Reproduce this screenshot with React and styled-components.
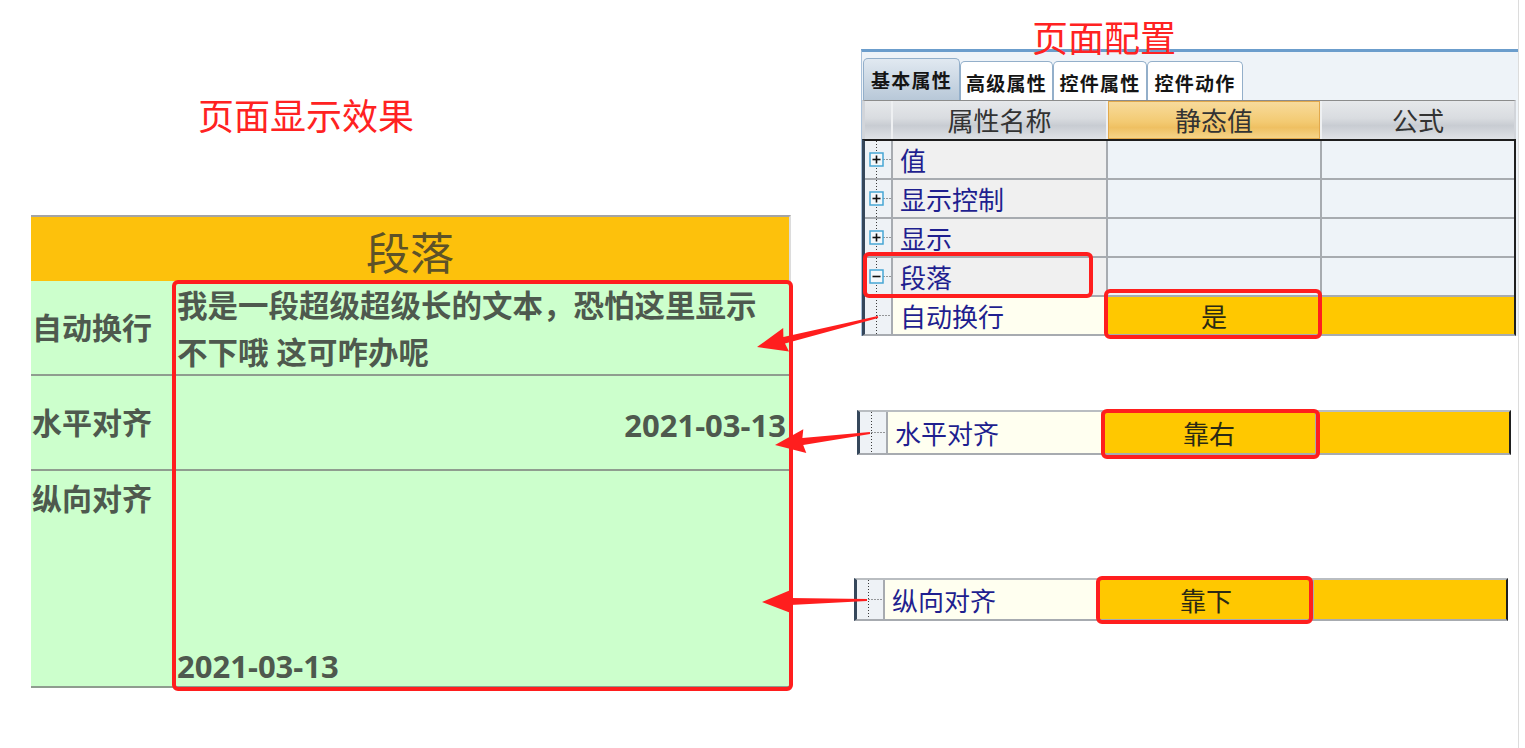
import React from 'react';
import styled, { createGlobalStyle } from 'styled-components';

const CJK = `"Noto Sans CJK SC", "Noto Sans", sans-serif`;
const SHOW = `"Open Sans", "Noto Sans CJK SC", sans-serif`;

const GlobalStyle = createGlobalStyle`
  html, body { margin: 0; padding: 0; background: #ffffff; }
  body { font-family: ${CJK}; }
  #root { width: 1525px; height: 748px; }
  * { box-sizing: border-box; }
`;

const Canvas = styled.div`
  position: relative;
  width: 1525px;
  height: 748px;
  display: flex;
  align-items: stretch;
  overflow: hidden;
  background: #ffffff;
`;

/* ---------- captions ---------- */
const Caption = styled.h2`
  position: relative;
  z-index: 1;
  margin: ${p => p.$top}px 0 ${p => p.$bottom || 0}px;
  padding-left: ${p => p.$indent}px;
  font: 400 36px/36px ${CJK};
  color: #ff2222;
`;

/* ---------- left: rendered page ---------- */
const LeftPane = styled.section`
  display: flex;
  flex-direction: column;
  width: 760px;
  margin-left: 31px;
`;

const ShowTable = styled.div`
  margin-top: 83px;
  width: 760px;
  display: grid;
  grid-template-columns: 143px 1fr;
  border-top: 2px solid #a4a4a4;
  border-right: 2px solid #dcdcdc;
`;

const ShowHeader = styled.div`
  grid-column: 1 / -1;
  height: 64px;
  background: #fdc10c;
  display: flex;
  align-items: center;
  justify-content: center;
  padding-top: 4px;
  font: 400 44px/44px ${CJK};
  color: #5d5228;
`;

const ShowCell = styled.div`
  height: ${p => p.$h + 2}px;
  background: #ccffcc;
  border-bottom: 2px solid #8f9d8f;
  display: flex;
  align-items: ${p => p.$v || 'center'};
  justify-content: ${p => p.$h2 || 'flex-start'};
  padding: ${p => p.$pad || '0'};
  font: 700 ${p => p.$size || 30}px/${p => p.$lh || 30}px ${SHOW};
  color: #4e594e;
  overflow: visible;
`;

const WrapText = styled.div`
  width: 100%;
`;

/* ---------- right: property panel ---------- */
const RightPane = styled.section`
  display: flex;
  flex-direction: column;
  width: 669px;
  margin-left: 59px;
  border-right: 1px solid #dcdcdc;
`;

const Panel = styled.div`
  margin-left: 11px;
  width: 657px;
  background: #eef3f8;
  border-left: 1px solid #a9c1da;
  border-top: 3px solid #6b9dcc;
`;

const TabBar = styled.div`
  height: 48px;
  display: flex;
  align-items: flex-end;
  padding-left: 1px;
`;

const Tab = styled.div`
  width: ${p => p.$w}px;
  height: ${p => (p.$active ? 42 : 39)}px;
  border: 1px solid #93afca;
  border-bottom: none;
  border-radius: 5px 5px 0 0;
  background: ${p => (p.$active ? 'linear-gradient(#e1e9f1, #b8c8d8)' : '#ffffff')};
  display: flex;
  align-items: center;
  justify-content: center;
  padding-top: ${p => (p.$active ? 0 : 3)}px;
  font: 700 19px/20px ${CJK};
  letter-spacing: 1.2px;
  color: #151515;
`;

const COLS = '26px 213px 212px 1fr';

const HeadGrid = styled.div`
  width: 654px;
  height: 39px;
  display: grid;
  grid-template-columns: ${COLS};
  gap: 0 2px;
  background: #eef0f2;
  border-top: 1px solid #8c8c8c;
  border-left: 3px solid #d2d5da;
  border-right: 2px solid #d2d5da;
`;

const HeadCell = styled.div`
  display: flex;
  align-items: center;
  justify-content: center;
  font: 400 26px/26px ${CJK};
  color: #333333;
  background: ${p =>
    p.$active
      ? 'linear-gradient(#f8dc9e 0%, #f3ca72 55%, #efc062 70%, #f6d68c 100%)'
      : 'linear-gradient(#e6e8eb 0%, #d9dce0 45%, #c8ccd2 65%, #dfe2e6 100%)'};
  box-shadow: ${p => (p.$active ? 'inset 0 0 0 1px #e2a94c' : 'none')};
`;

const PropGrid = styled.div`
  width: 654px;
  display: grid;
  grid-template-columns: ${COLS};
  grid-auto-rows: ${p => p.$row}px;
  gap: 2px;
  background: #a7abb0;
  border-top: 2px solid ${p => p.$topColor || '#1d1d1d'};
  border-left: 3px solid #35475b;
  border-right: 2px solid #1f1f1f;
  border-bottom: 2px solid #a7abb0;
  margin-left: ${p => p.$left || 0}px;
  margin-top: ${p => p.$top || 0}px;
`;

const ExpCell = styled.div`
  background: #eef2f6;
  display: flex;
`;

const NameCell = styled.div`
  background: ${p => (p.$hl ? '#fffff0' : '#f0f0f0')};
  display: flex;
  align-items: center;
  padding: 0 0 0 7px;
  font: 400 26px/26px ${CJK};
  color: #1f1f8f;
`;

const ValueCell = styled.div`
  background: ${p => (p.$hl ? '#ffc800' : '#eef3f8')};
  display: flex;
  align-items: center;
  justify-content: center;
  font: 400 26px/26px ${CJK};
  color: #2a2a14;
`;

/* ---------- overlay ---------- */
const Overlay = styled.svg`
  position: absolute;
  left: 0;
  top: 0;
  z-index: 5;
  pointer-events: none;
`;

function TreeIcon({ kind, h }) {
  const cx = 11.5;
  const cy = Math.floor(h / 2) + 0.5;
  const dot = { stroke: '#3a3a3a', strokeWidth: 1, strokeDasharray: '1 2' };
  return (
    <svg width="26" height={h} viewBox={`0 0 26 ${h}`}>
      <line x1={cx} y1="0" x2={cx} y2={h} {...dot} />
      <line x1={kind === 'leaf' ? cx : cx + 7} y1={cy} x2="26" y2={cy} {...dot} />
      {kind !== 'leaf' && (
        <>
          <rect x={cx - 6.5} y={cy - 6.5} width="13" height="13" fill="#f4f8fb" stroke="#47a7d5" strokeWidth="1.5" />
          <line x1={cx - 4} y1={cy} x2={cx + 4} y2={cy} stroke="#111" strokeWidth="1.6" />
          {kind === 'plus' && <line x1={cx} y1={cy - 4} x2={cx} y2={cy + 4} stroke="#111" strokeWidth="1.6" />}
        </>
      )}
    </svg>
  );
}

function PropRow({ icon, name, value, hl, h }) {
  return (
    <>
      <ExpCell>
        <TreeIcon kind={icon} h={h} />
      </ExpCell>
      <NameCell $hl={hl}>{name}</NameCell>
      <ValueCell $hl={hl}>{value}</ValueCell>
      <ValueCell $hl={hl} />
    </>
  );
}

function Arrow({ from, to }) {
  const [x1, y1] = from;
  const [x2, y2] = to;
  const dx = x2 - x1;
  const dy = y2 - y1;
  const len = Math.hypot(dx, dy);
  const ux = dx / len;
  const uy = dy / len;
  const nx = -uy;
  const ny = ux;
  const L = 28;
  const W = 12;
  const bx = x2 - ux * L;
  const by = y2 - uy * L;
  const p = (x, y) => `${x.toFixed(1)},${y.toFixed(1)}`;
  const pts = [
    p(x1 + nx * 1, y1 + ny * 1),
    p(bx + nx * 3.4, by + ny * 3.4),
    p(bx - ux * 2 + nx * W, by - uy * 2 + ny * W),
    p(x2, y2),
    p(bx - ux * 2 - nx * W, by - uy * 2 - ny * W),
    p(bx - nx * 3.4, by - ny * 3.4),
    p(x1 - nx * 1, y1 - ny * 1),
  ].join(' ');
  return <polygon points={pts} fill="#ff1e1e" />;
}

const tabs = [
  { label: '基本属性', w: 97, active: true },
  { label: '高级属性', w: 93 },
  { label: '控件属性', w: 94 },
  { label: '控件动作', w: 96 },
];

const props = [
  { icon: 'plus', name: '值' },
  { icon: 'plus', name: '显示控制' },
  { icon: 'plus', name: '显示' },
  { icon: 'minus', name: '段落' },
  { icon: 'leaf', name: '自动换行', value: '是', hl: true },
];

const boxes = [
  { x: 174, y: 282, w: 617, h: 407 },
  { x: 865, y: 254, w: 226, h: 42 },
  { x: 1106, y: 291, w: 214, h: 46 },
  { x: 1103, y: 411, w: 215, h: 46 },
  { x: 1098, y: 578, w: 213, h: 44 },
];

const arrows = [
  { from: [878, 317], to: [757, 347] },
  { from: [870, 433], to: [775, 445] },
  { from: [867, 600], to: [762, 602] },
];

export default function App() {
  return (
    <>
      <GlobalStyle />
      <Canvas>
        <LeftPane>
          <Caption $top={96} $indent={167}>页面显示效果</Caption>
          <ShowTable>
            <ShowHeader>段落</ShowHeader>

            <ShowCell $h={93} $pad="0 0 0 1px">自动换行</ShowCell>
            <ShowCell $h={93} $v="flex-start" $size={30.5} $lh={47} $pad="1px 4px 0 3px">
              <WrapText>我是一段超级超级长的文本，恐怕这里显示不下哦 这可咋办呢</WrapText>
            </ShowCell>

            <ShowCell $h={93} $pad="0 0 0 1px">水平对齐</ShowCell>
            <ShowCell $h={93} $h2="flex-end" $size={31} $lh={31} $pad="5px 3px 0 3px">2021-03-13</ShowCell>

            <ShowCell $h={215} $v="flex-start" $pad="13px 0 0 1px">纵向对齐</ShowCell>
            <ShowCell $h={215} $v="flex-end" $size={31} $lh={31} $pad="0 3px 4px 3px">2021-03-13</ShowCell>
          </ShowTable>
        </LeftPane>

        <RightPane>
          <Caption $top={18} $indent={182} $bottom={-5}>页面配置</Caption>
          <Panel>
            <TabBar>
              {tabs.map(t => (
                <Tab key={t.label} $w={t.w} $active={t.active}>{t.label}</Tab>
              ))}
            </TabBar>
            <HeadGrid>
              <HeadCell />
              <HeadCell>属性名称</HeadCell>
              <HeadCell $active>静态值</HeadCell>
              <HeadCell>公式</HeadCell>
            </HeadGrid>
            <PropGrid $row={37}>
              {props.map(r => (
                <PropRow key={r.name} {...r} h={37} />
              ))}
            </PropGrid>
          </Panel>

          <PropGrid $row={41} $left={7} $top={74} $topColor="#b9bdc1">
            <PropRow icon="leaf" name="水平对齐" value="靠右" hl h={41} />
          </PropGrid>

          <PropGrid $row={39} $left={4} $top={123} $topColor="#b9bdc1">
            <PropRow icon="leaf" name="纵向对齐" value="靠下" hl h={39} />
          </PropGrid>
        </RightPane>

        <Overlay width="1525" height="748" viewBox="0 0 1525 748">
          {boxes.map((b, i) => (
            <rect key={i} x={b.x} y={b.y} width={b.w} height={b.h} rx="4" fill="none" stroke="#ff1e1e" strokeWidth="4" />
          ))}
          {arrows.map((a, i) => (
            <Arrow key={i} {...a} />
          ))}
        </Overlay>
      </Canvas>
    </>
  );
}
